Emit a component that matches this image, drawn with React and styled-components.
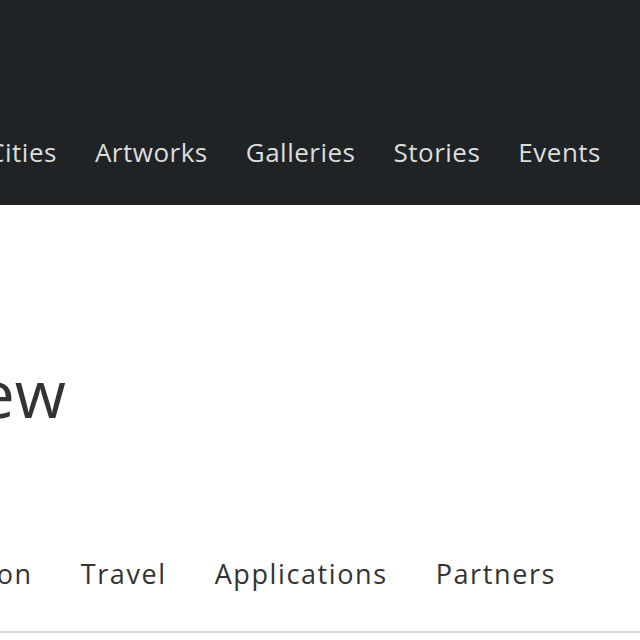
import styled, { createGlobalStyle } from "styled-components";

const GlobalStyle = createGlobalStyle`
  body {
    margin: 0;
    background: #ffffff;
    font-family: "Open Sans", "Noto Sans", sans-serif;
  }
`;

const mainLinks = ["Countries", "Cities", "Artworks", "Galleries", "Stories", "Events"];
const subLinks = ["Education", "Travel", "Applications", "Partners"];

export default function App() {
  return (
    <Page>
      <GlobalStyle />
      <Header>
        <MainNav>
          {mainLinks.map((l) => (
            <MainLink key={l}>{l}</MainLink>
          ))}
        </MainNav>
      </Header>
      <Hero>
        <Title>Overview</Title>
      </Hero>
      <SubNav>
        {subLinks.map((l) => (
          <SubLink key={l}>{l}</SubLink>
        ))}
      </SubNav>
    </Page>
  );
}

const Page = styled.div`
  width: 640px;
  overflow: hidden;
`;

const Header = styled.header`
  height: 205px;
  background-color: #1f2326;
  display: flex;
  align-items: flex-end;
  overflow: hidden;
`;

const MainNav = styled.nav`
  flex: 1;
  min-width: 0;
  display: flex;
  justify-content: flex-end;
  gap: 38px;
  padding: 0 39px 33px 0;
`;

const MainLink = styled.a`
  color: #dcdddd;
  font-size: 26px;
  line-height: 40px;
  letter-spacing: 0.5px;
  white-space: nowrap;
  cursor: pointer;
`;

const Hero = styled.section`
  margin-top: 148px;
  display: flex;
  justify-content: flex-end;
  width: 66px;
`;

const Title = styled.h1`
  margin: 0;
  color: #333333;
  font-size: 66px;
  font-weight: 400;
  line-height: 1.2;
  white-space: nowrap;
`;

const SubNav = styled.nav`
  margin-top: 122px;
  display: flex;
  justify-content: flex-end;
  gap: 48px;
  padding: 0 84px 37px 0;
  border-bottom: 2px solid #d6d6d6;
`;

const SubLink = styled.a`
  color: #333333;
  font-size: 27px;
  line-height: 40px;
  letter-spacing: 1.6px;
  white-space: nowrap;
  cursor: pointer;
`;
